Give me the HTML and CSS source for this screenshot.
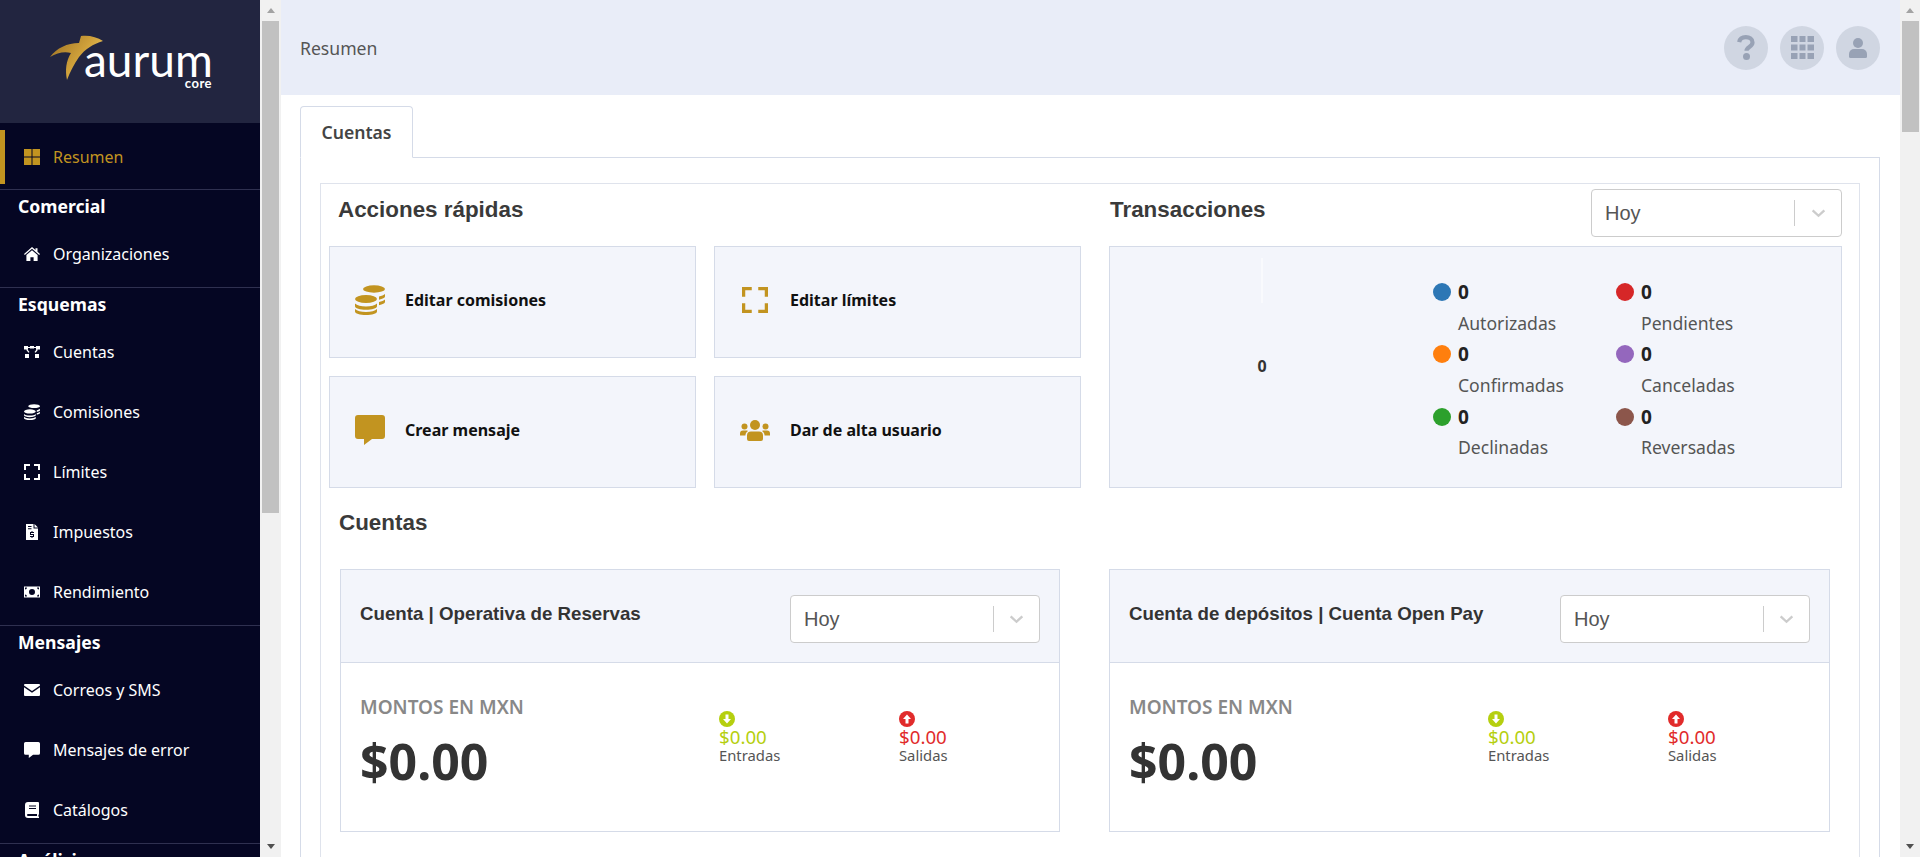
FILE: index.html
```html
<!DOCTYPE html>
<html lang="es">
<head>
    <meta charset="UTF-8">
    <title>Resumen</title>
    <link rel="stylesheet" href="styles.css">
</head>
<body>
    <!-- icon sprite -->
    <svg class="sprite" xmlns="http://www.w3.org/2000/svg">
        <defs>
            <linearGradient id="gold" x1="0" y1="0" x2="1" y2="0.6">
                <stop offset="0" stop-color="#9a6f22"/>
                <stop offset="0.6" stop-color="#cfa03a"/>
                <stop offset="1" stop-color="#efcb62"/>
            </linearGradient>
        </defs>
        <symbol id="i-grid" viewBox="0 0 16 16"><path d="M0 0h7.500v7.500H0zM8.500 0H16v7.500H8.500zM0 8.500h7.500V16H0zM8.500 8.500H16V16H8.500z"/></symbol>
        <symbol id="i-home" viewBox="0 0 16 14"><path d="M8 0 11.500 3V1.200h2v3.500L16 7l-.8.900L8 1.800.8 7.900 0 7zM8 3.200l5.600 4.700V14H9.600v-3.800H6.400V14H2.400V7.900z"/></symbol>
        <symbol id="i-diagram" viewBox="0 0 16 12"><path d="M0 0h4v3.500H0zM6 0h4v2.500H6zM12 0h4v3.500h-4zM1 8h4v4H1zM11 8h4v4h-4zM4 1h2v1H4zM10 1h2v1h-2zM2.500 3.500h1l2 2.500-1 .8-2-2.500zM12.500 3.500h1v1l-2 2.300-1-.8z"/></symbol>
        <symbol id="i-coins" viewBox="0 0 30 30"><ellipse cx="19" cy="4" rx="11" ry="3.700"/><path d="M24 11.500c2.600-.4 4.800-1.300 6-2.500v2.600c0 1.200-2.400 2.500-6 3.200zM24 17c2.600-.4 4.800-1.300 6-2.500v2.600c0 1.200-2.400 2.500-6 3.200z"/><ellipse cx="11" cy="14" rx="11" ry="4"/><path d="M0 18.600c2 1.900 6 3 11 3s9-1.100 11-3v2.700c0 2-5 3.500-11 3.500S0 23.300 0 21.300zM0 24c2 1.900 6 3 11 3s9-1.100 11-3v2.500c0 2-5 3.500-11 3.500S0 28.500 0 26.500z"/></symbol>
        <symbol id="i-expand" viewBox="0 0 16 16"><path d="M1 6V1h5M10 1h5v5M15 10v5h-5M6 15H1v-5" fill="none" stroke="currentColor" stroke-width="2"/></symbol>
        <symbol id="i-invoice" viewBox="0 0 12 16"><path fill-rule="evenodd" d="M0 0h7.500v4.500H12V16H0zM8.500 0 12 3.500H8.500zM2 2v1h3.500V2zM2 4.200v1h3.500v-1zM5.500 7v1H4v3h3v1H4v1h1.500v1h1v-1H8v-3H5V9h3V8H6.500V7z"/></symbol>
        <symbol id="i-money" viewBox="0 0 16 11"><path fill-rule="evenodd" d="M0 0h16v11H0zM1 1v2a2 2 0 0 0 2-2zM13 1a2 2 0 0 0 2 2V1zM1 8v2h2a2 2 0 0 0-2-2zM15 8a2 2 0 0 0-2 2h2zM8 2.500a3 3 0 1 0 0 6 3 3 0 0 0 0-6z"/></symbol>
        <symbol id="i-mail" viewBox="0 0 16 12"><path d="M1 0h14a1 1 0 0 1 1 1v.4L8 7 0 1.400V1a1 1 0 0 1 1-1zM0 3.200 8 8.800l8-5.600V11a1 1 0 0 1-1 1H1a1 1 0 0 1-1-1z"/></symbol>
        <symbol id="i-comment" viewBox="0 0 30 30"><path d="M3 0h24a3 3 0 0 1 3 3v18a3 3 0 0 1-3 3H17l-8 6v-6H3a3 3 0 0 1-3-3V3a3 3 0 0 1 3-3z"/></symbol>
        <symbol id="i-book" viewBox="0 0 14 16"><path fill-rule="evenodd" d="M3 0h10a1 1 0 0 1 1 1v11a1 1 0 0 1-.6.900v1.400l.6.700v1H3a3 3 0 0 1-3-3V3a3 3 0 0 1 3-3zM4 3.500v1h7v-1zM4 6v1h7V6zM2 13a1 1 0 0 0 1 1h9v-2H3a1 1 0 0 0-1 1z"/></symbol>
        <symbol id="i-users" viewBox="0 0 30 21"><circle cx="15" cy="5" r="5"/><circle cx="4.500" cy="6.500" r="3"/><circle cx="25.500" cy="6.500" r="3"/><path d="M11 11.500h8a4 4 0 0 1 4 4V19a2 2 0 0 1-2 2H9a2 2 0 0 1-2-2v-3.500a4 4 0 0 1 4-4zM3 10.500h4l1 .6c-1.800 1.200-2.500 2.700-2.600 4.400H0V13.500a3 3 0 0 1 3-3zM23 10.500h4a3 3 0 0 1 3 3v2h-5.400c-.1-1.700-.8-3.200-2.600-4.400z"/></symbol>
        <symbol id="i-question" viewBox="0 0 18 25"><path d="M2.200 7.200C2.800 3.700 5.400 2.200 8.800 2.200c3.700 0 6.700 1.900 6.700 5.200 0 4.600-6 4.400-6 8.300" fill="none" stroke="currentColor" stroke-width="4.200"/><circle cx="9.500" cy="21.500" r="3.500"/></symbol>
        <symbol id="i-th" viewBox="0 0 23 23"><path d="M0 0h6.500v6H0zM8.500 0h6v6h-6zM16.500 0H23v6h-6.500zM0 8.500h6.500v6H0zM8.500 8.500h6v6h-6zM16.500 8.500H23v6h-6.500zM0 17h6.500v6H0zM8.500 17h6v6h-6zM16.500 17H23v6h-6.500z"/></symbol>
        <symbol id="i-user" viewBox="0 0 18 20"><circle cx="9" cy="5" r="5"/><path d="M5 11h8a5 5 0 0 1 5 5v2.500a1.500 1.500 0 0 1-1.500 1.500h-15A1.500 1.500 0 0 1 0 18.500V16a5 5 0 0 1 5-5z"/></symbol>
        <symbol id="i-down" viewBox="0 0 16 16"><circle cx="8" cy="8" r="8"/><path fill="#fff" d="M6.500 3.500h3V8H12l-4 4.500L4 8h2.500z"/></symbol>
        <symbol id="i-up" viewBox="0 0 16 16"><circle cx="8" cy="8" r="8"/><path fill="#fff" d="M6.500 12.500h3V8H12L8 3.500 4 8h2.500z"/></symbol>
        <symbol id="i-chevron" viewBox="0 0 16 10"><path d="M1.500 1.500 8 7.500l6.500-6" fill="none" stroke="currentColor" stroke-width="2.600"/></symbol>
    </svg>

    <div class="app">
        <aside class="sidebar">
            <div class="logo">
                <svg class="logo-art" width="180" height="60" viewBox="40 30 180 60">
                    <path fill="url(#gold)" d="M81 36c8-1 16 1 22 5-10 3-18 8-24 16-5 7-9 15-12 23-2-10-1-19 4-27-7-2-14 0-21 4 7-9 17-14 29-14z"/>
                    <text class="logo-word" x="84" y="77">aurum</text>
                    <text class="logo-sub" x="212" y="88" text-anchor="end">core</text>
                </svg>
            </div>
            <nav class="nav">
                <div class="nav-top">
                    <a class="nav-item active"><svg class="nav-icon icon-grid"><use href="#i-grid"/></svg>Resumen</a>
                </div>
                <div class="nav-group">
                    <h4>Comercial</h4>
                    <a class="nav-item"><svg class="nav-icon icon-home"><use href="#i-home"/></svg>Organizaciones</a>
                </div>
                <div class="nav-group">
                    <h4>Esquemas</h4>
                    <a class="nav-item"><svg class="nav-icon icon-diagram"><use href="#i-diagram"/></svg>Cuentas</a>
                    <a class="nav-item"><svg class="nav-icon"><use href="#i-coins"/></svg>Comisiones</a>
                    <a class="nav-item"><svg class="nav-icon icon-expand"><use href="#i-expand"/></svg>Límites</a>
                    <a class="nav-item"><svg class="nav-icon"><use href="#i-invoice"/></svg>Impuestos</a>
                    <a class="nav-item"><svg class="nav-icon"><use href="#i-money"/></svg>Rendimiento</a>
                </div>
                <div class="nav-group">
                    <h4>Mensajes</h4>
                    <a class="nav-item"><svg class="nav-icon"><use href="#i-mail"/></svg>Correos y SMS</a>
                    <a class="nav-item"><svg class="nav-icon"><use href="#i-comment"/></svg>Mensajes de error</a>
                    <a class="nav-item"><svg class="nav-icon"><use href="#i-book"/></svg>Catálogos</a>
                </div>
                <div class="nav-group">
                    <h4>Análisis</h4>
                </div>
            </nav>
        </aside>
        <div class="scrollbar scrollbar-side">
            <span class="arrow-up"></span>
            <span class="thumb"></span>
            <span class="arrow-down"></span>
        </div>

        <main class="main">
            <header class="topbar">
                <span class="crumb">Resumen</span>
                <div class="top-actions">
                    <span class="round-btn"><svg class="icon-question"><use href="#i-question"/></svg></span>
                    <span class="round-btn"><svg class="icon-th"><use href="#i-th"/></svg></span>
                    <span class="round-btn"><svg class="icon-user"><use href="#i-user"/></svg></span>
                </div>
            </header>

            <div class="content">
                <div class="tabs"><span class="tab">Cuentas</span></div>
                <div class="tab-panel">
                    <div class="inner">
                        <div class="top-row">
                            <section>
                                <h3 class="section-title">Acciones rápidas</h3>
                                <div class="quick-grid">
                                    <a class="quick-card"><span class="quick-icon"><svg class="icon-30"><use href="#i-coins"/></svg></span>Editar comisiones</a>
                                    <a class="quick-card"><span class="quick-icon"><svg class="icon-26"><use href="#i-expand"/></svg></span>Editar límites</a>
                                    <a class="quick-card"><span class="quick-icon"><svg class="icon-30"><use href="#i-comment"/></svg></span>Crear mensaje</a>
                                    <a class="quick-card"><span class="quick-icon"><svg class="icon-users"><use href="#i-users"/></svg></span>Dar de alta usuario</a>
                                </div>
                            </section>
                            <section>
                                <div class="title-row">
                                    <h3 class="section-title">Transacciones</h3>
                                    <div class="select select-top">Hoy<span class="select-sep"></span><svg class="select-arrow"><use href="#i-chevron"/></svg></div>
                                </div>
                                <div class="trans-panel">
                                    <svg class="donut" width="304" height="240">
                                        <line x1="152" y1="11" x2="152" y2="56" stroke="#fff" stroke-width="1"/>
                                        <text x="152" y="125" text-anchor="middle">0</text>
                                    </svg>
                                    <div class="legend">
                                        <div class="legend-item"><span class="dot dot-blue"></span><b>0</b><span class="legend-label">Autorizadas</span></div>
                                        <div class="legend-item"><span class="dot dot-red"></span><b>0</b><span class="legend-label">Pendientes</span></div>
                                        <div class="legend-item"><span class="dot dot-orange"></span><b>0</b><span class="legend-label">Confirmadas</span></div>
                                        <div class="legend-item"><span class="dot dot-purple"></span><b>0</b><span class="legend-label">Canceladas</span></div>
                                        <div class="legend-item"><span class="dot dot-green"></span><b>0</b><span class="legend-label">Declinadas</span></div>
                                        <div class="legend-item"><span class="dot dot-brown"></span><b>0</b><span class="legend-label">Reversadas</span></div>
                                    </div>
                                </div>
                            </section>
                        </div>

                        <h3 class="section-title accounts-title">Cuentas</h3>
                        <div class="accounts">
                            <article class="account">
                                <div class="account-head">
                                    <h4>Cuenta | Operativa de Reservas</h4>
                                    <div class="select">Hoy<span class="select-sep"></span><svg class="select-arrow"><use href="#i-chevron"/></svg></div>
                                </div>
                                <div class="account-body">
                                    <div class="amount">
                                        <div class="amount-label">MONTOS EN MXN</div>
                                        <div class="amount-value">$0.00</div>
                                    </div>
                                    <div class="flow flow-in"><svg><use href="#i-down"/></svg><strong>$0.00</strong><span>Entradas</span></div>
                                    <div class="flow flow-out"><svg><use href="#i-up"/></svg><strong>$0.00</strong><span>Salidas</span></div>
                                </div>
                            </article>
                            <article class="account">
                                <div class="account-head">
                                    <h4>Cuenta de depósitos | Cuenta Open Pay</h4>
                                    <div class="select">Hoy<span class="select-sep"></span><svg class="select-arrow"><use href="#i-chevron"/></svg></div>
                                </div>
                                <div class="account-body">
                                    <div class="amount">
                                        <div class="amount-label">MONTOS EN MXN</div>
                                        <div class="amount-value">$0.00</div>
                                    </div>
                                    <div class="flow flow-in"><svg><use href="#i-down"/></svg><strong>$0.00</strong><span>Entradas</span></div>
                                    <div class="flow flow-out"><svg><use href="#i-up"/></svg><strong>$0.00</strong><span>Salidas</span></div>
                                </div>
                            </article>
                        </div>
                    </div>
                </div>
            </div>
        </main>
        <div class="scrollbar scrollbar-page">
            <span class="arrow-up"></span>
            <span class="thumb"></span>
            <span class="arrow-down"></span>
        </div>
    </div>
</body>
</html>
```

FILE: styles.css
```css
* {
    box-sizing: border-box;
}
body {
    margin: 0;
    height: 100vh;
    overflow: hidden;
    background: #fff;
    color: #333;
    font-family: "Noto Sans", "Open Sans", sans-serif;
}
h3, h4 {
    margin: 0;
}
svg {
    fill: currentColor;
    display: block;
}
.sprite {
    width: 0;
    height: 0;
    overflow: hidden;
    position: absolute;
}
.app {
    display: flex;
    height: 857px;
    overflow: hidden;
}

/* Sidebar */
.sidebar {
    width: 260px;
    flex: none;
    background: #050623;
    color: #fff;
    overflow: hidden;
}
.logo {
    height: 123px;
    background: #222540;
    padding: 30px 0 0 40px;
}
.logo-art {
    overflow: visible;
}
.logo-word {
    font-family: Lato, sans-serif;
    font-size: 46px;
    font-weight: 400;
    fill: #fff;
}
.logo-sub {
    font-family: Lato, sans-serif;
    font-size: 13px;
    font-weight: 700;
    letter-spacing: 0.5px;
    fill: #fff;
}
.nav-top {
    padding: 7px 0 5px;
}
.nav-group {
    border-top: 1px solid #2f3050;
    padding-bottom: 3px;
}
.nav-group h4 {
    font-size: 17.600px;
    font-weight: 700;
    line-height: 32px;
    margin-bottom: 2px;
    padding-left: 18px;
}
.nav-item {
    display: flex;
    align-items: center;
    height: 60px;
    padding-left: 24px;
    font-size: 16px;
}
.nav-top .nav-item {
    height: 54px;
}
.nav-item.active {
    color: #c29420;
    box-shadow: inset 5px 0 0 #c29420;
}
.nav-icon {
    width: 16px;
    height: 16px;
    margin-right: 13px;
    flex: none;
}

/* Fake scrollbars */
.scrollbar {
    flex: none;
    background: #f1f1f1;
    display: flex;
    flex-direction: column;
    align-items: center;
}
.scrollbar-side {
    width: 21px;
}
.scrollbar-page {
    width: 20px;
}
.arrow-up, .arrow-down {
    width: 0;
    height: 0;
    border-left: 4.5px solid transparent;
    border-right: 4.5px solid transparent;
}
.arrow-up {
    margin-top: 8px;
    border-bottom: 5px solid #a3a3a3;
}
.arrow-down {
    margin-top: auto;
    margin-bottom: 8px;
    border-top: 5px solid #505050;
}
.thumb {
    width: 17px;
    margin-top: 8px;
    background: #c1c1c1;
}
.scrollbar-side .thumb {
    height: 492px;
}
.scrollbar-page .thumb {
    height: 111px;
}

/* Main */
.main {
    flex: 1;
    min-width: 0;
    display: flex;
    flex-direction: column;
}
.topbar {
    height: 95px;
    flex: none;
    background: #e9edf8;
    display: flex;
    align-items: center;
    justify-content: space-between;
    padding: 0 20px 0 19px;
}
.crumb {
    font-size: 17.600px;
    padding-top: 1px;
    color: #555;
}
.top-actions {
    display: flex;
    gap: 12px;
}
.round-btn {
    width: 44px;
    height: 44px;
    border-radius: 50%;
    background: #d0d6e2;
    color: #98a2b5;
    display: flex;
    align-items: center;
    justify-content: center;
}
.icon-question {
    width: 18px;
    height: 25px;
}
.icon-th {
    width: 23px;
    height: 23px;
}
.icon-user {
    width: 18px;
    height: 20px;
}
.content {
    padding: 11px 20px 0 19px;
}
.tabs {
    display: flex;
}
.tab {
    width: 113px;
    height: 52px;
    margin-bottom: -1px;
    border: 1px solid #d5dbe8;
    border-bottom-color: #fff;
    border-radius: 4px 4px 0 0;
    background: #fff;
    position: relative;
    display: flex;
    align-items: center;
    justify-content: center;
    font-size: 17.600px;
    font-weight: 600;
    color: #444;
}
.tab-panel {
    border: 1px solid #d5dbe8;
    padding: 25px 19px 0;
}
.inner {
    border: 1px solid #dfe3ec;
    padding: 0 18px 40px 8px;
}
.top-row {
    display: grid;
    grid-template-columns: 752px 733px;
    gap: 28px;
}
.section-title {
    font-family: "Liberation Sans", Arial, sans-serif;
    font-size: 22.400px;
    font-weight: 700;
    line-height: 26px;
    color: #3a3a3a;
}
.top-row > section > .section-title {
    padding: 13px 0 0 9px;
    height: 62px;
}
.quick-grid {
    display: grid;
    grid-template-columns: 367px 367px;
    grid-auto-rows: 112px;
    gap: 18px;
}
.quick-card {
    display: flex;
    align-items: center;
    padding: 0 0 4px 25px;
    background: #f3f5fb;
    border: 1px solid #d5dbe8;
    font-size: 16px;
    font-weight: 700;
    color: #111;
}
.quick-icon {
    width: 30px;
    margin-right: 20px;
    display: flex;
    justify-content: center;
    color: #c29420;
}
.icon-30 {
    width: 30px;
    height: 30px;
}
.icon-26 {
    width: 26px;
    height: 26px;
}
.icon-users {
    width: 30px;
    height: 21px;
}
.title-row {
    display: flex;
    justify-content: space-between;
    align-items: flex-start;
    height: 62px;
}
.title-row .section-title {
    padding: 13px 0 0 1px;
}
.select {
    width: 250px;
    height: 48px;
    padding-left: 13px;
    background: #fff;
    border: 1px solid #ccc;
    border-radius: 4px;
    display: flex;
    align-items: center;
    font-family: "Liberation Sans", Arial, sans-serif;
    font-size: 20px;
    color: #555;
}
.select-top {
    width: 251px;
    margin-top: 5px;
}
.select-sep {
    width: 1px;
    height: 26px;
    background: #ccc;
    margin-left: auto;
    margin-right: 15px;
}
.select-top .select-sep {
    margin-right: 16px;
}
.select-arrow {
    width: 15px;
    height: 9px;
    color: #ccc;
    margin-right: 15px;
}
.trans-panel {
    height: 242px;
    background: #f3f5fb;
    border: 1px solid #d5dbe8;
    display: flex;
}
.donut {
    flex: none;
}
.donut text {
    font-size: 16px;
    font-weight: 700;
    fill: #333;
}
.legend {
    margin: 34px 0 0 19px;
    display: grid;
    grid-template-columns: 183px 183px;
    grid-auto-rows: 62.300px;
    align-content: start;
}
.legend-item {
    display: grid;
    grid-template-columns: 25px auto;
    grid-template-rows: 22px 39px;
    align-items: center;
}
.legend-item b {
    font-size: 19px;
    line-height: 22px;
    color: #222;
}
.legend-label {
    grid-column: 2;
    font-size: 17.600px;
    color: #555;
}
.dot {
    width: 18px;
    height: 18px;
    border-radius: 50%;
}
.dot-blue { background: #2d77b5; }
.dot-red { background: #d62728; }
.dot-orange { background: #ff7f0e; }
.dot-purple { background: #9467bd; }
.dot-green { background: #2ca02c; }
.dot-brown { background: #8c564b; }

.accounts-title {
    padding: 22px 0 0 10px;
    height: 81px;
}
.accounts {
    display: grid;
    grid-template-columns: 720px 721px;
    gap: 49px;
    padding-left: 11px;
}
.account {
    border: 1px solid #d5dbe8;
    height: 263px;
}
.account-head {
    height: 93px;
    padding: 25px 19px 0;
    background: #f3f5fb;
    border-bottom: 1px solid #d5dbe8;
    display: flex;
    justify-content: space-between;
    align-items: flex-start;
}
.account-head h4 {
    font-family: "Liberation Sans", Arial, sans-serif;
    font-size: 18.720px;
    font-weight: 700;
    line-height: 22px;
    padding-top: 8px;
    color: #333;
}
.account-body {
    display: flex;
    padding: 31px 0 0 19px;
}
.amount {
    width: 359px;
    flex: none;
}
.amount-label {
    font-size: 19px;
    font-weight: 600;
    line-height: 26px;
    color: #888;
}
.amount-value {
    font-size: 50px;
    font-weight: 700;
    line-height: 70px;
    margin-top: 6px;
    color: #333;
}
.flow {
    width: 180px;
    flex: none;
    display: flex;
    flex-direction: column;
    padding-top: 17px;
}
.flow svg {
    width: 16px;
    height: 16px;
}
.flow strong {
    font-size: 18.700px;
    font-weight: 400;
    line-height: 20px;
}
.flow span {
    font-size: 14.800px;
    line-height: 16px;
    color: #555;
}
.flow-in { color: #b5cf0f; }
.flow-out { color: #e12b2b; }
```
